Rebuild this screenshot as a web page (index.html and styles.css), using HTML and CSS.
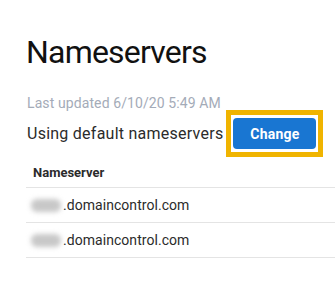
FILE: index.html
```html
<!DOCTYPE html>
<html>
<head>
<meta charset="utf-8">
<link rel="stylesheet" href="styles.css">
</head>
<body>
<div class="page">
  <h1 class="title">Nameservers</h1>
  <div class="updated">Last updated 6/10/20 5:49 AM</div>
  <div class="status">
    <span class="status-text">Using default nameservers</span>
    <span class="highlight"><button class="change">Change</button></span>
  </div>
  <div class="table">
    <div class="head">Nameserver</div>
    <div class="row"><span class="blur"></span><span class="domain">.domaincontrol.com</span></div>
    <div class="row"><span class="blur"></span><span class="domain">.domaincontrol.com</span></div>
  </div>
</div>
</body>
</html>
```

FILE: styles.css
```css
html, body {
  margin: 0;
  padding: 0;
  background: #fff;
}
.page {
  padding: 33px 0 0 26px;
  font-family: "Roboto", "Liberation Sans", sans-serif;
  color: #2b2b2b;
}
.title {
  margin: 0;
  font-size: 32px;
  font-weight: 400;
  line-height: 38px;
  letter-spacing: -0.8px;
  color: #111;
}
.updated {
  margin-top: 23px;
  font-size: 14px;
  line-height: 18px;
  letter-spacing: 0.1px;
  color: #a4abb8;
  padding-left: 1px;
}
.status {
  display: flex;
  align-items: center;
  margin-top: -2px;
}
.status-text {
  font-size: 16px;
  line-height: 20px;
  letter-spacing: 0.25px;
  padding-left: 1px;
  margin-right: 3px;
}
.highlight {
  display: inline-flex;
  border: 5px solid #f0b400;
  padding: 3px 2px;
  background: #fff;
}
.change {
  width: 83px;
  height: 31px;
  border: none;
  border-radius: 4px;
  background: #1976d2;
  color: #fff;
  font-family: "Roboto", "Liberation Sans", sans-serif;
  font-weight: 700;
  font-size: 14px;
  letter-spacing: 0.2px;
  padding: 0;
}
.table {
  margin-top: 2px;
}
.head {
  font-size: 13px;
  font-weight: 700;
  line-height: 22px;
  padding: 3px 0 3px 7px;
  border-bottom: 1px solid #e4e4e4;
  color: #2b2b2b;
}
.row {
  display: flex;
  align-items: center;
  height: 34px;
  border-bottom: 1px solid #e4e4e4;
  font-size: 14px;
  letter-spacing: 0.05px;
}
.blur {
  width: 30px;
  height: 13px;
  margin-left: 5px;
  margin-right: 2px;
  background: #c8c8c8;
  border-radius: 6px;
  filter: blur(2.5px);
}
.domain {
  color: #2b2b2b;
}
```
